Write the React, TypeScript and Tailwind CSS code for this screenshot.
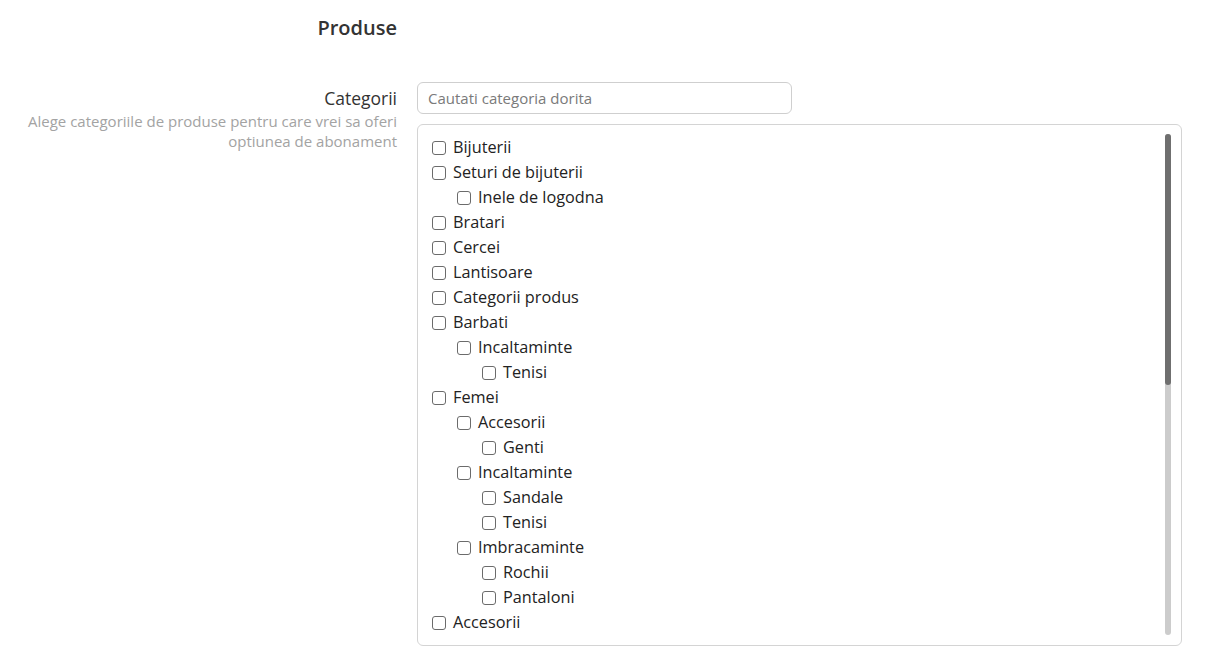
import * as React from "react";

type Category = { name: string; level: number };

const CATEGORIES: Category[] = [
  { name: "Bijuterii", level: 0 },
  { name: "Seturi de bijuterii", level: 0 },
  { name: "Inele de logodna", level: 1 },
  { name: "Bratari", level: 0 },
  { name: "Cercei", level: 0 },
  { name: "Lantisoare", level: 0 },
  { name: "Categorii produs", level: 0 },
  { name: "Barbati", level: 0 },
  { name: "Incaltaminte", level: 1 },
  { name: "Tenisi", level: 2 },
  { name: "Femei", level: 0 },
  { name: "Accesorii", level: 1 },
  { name: "Genti", level: 2 },
  { name: "Incaltaminte", level: 1 },
  { name: "Sandale", level: 2 },
  { name: "Tenisi", level: 2 },
  { name: "Imbracaminte", level: 1 },
  { name: "Rochii", level: 2 },
  { name: "Pantaloni", level: 2 },
  { name: "Accesorii", level: 0 },
];

const INDENT = ["pl-0", "pl-[25px]", "pl-[50px]"];

export default function App() {
  const [checked, setChecked] = React.useState<Record<number, boolean>>({});
  const [query, setQuery] = React.useState("");

  const visible = CATEGORIES.map((c, i) => ({ ...c, i })).filter((c) =>
    c.name.toLowerCase().includes(query.toLowerCase())
  );

  return (
    <div className="min-h-screen bg-white font-['Open_Sans',_'Liberation_Sans',_sans-serif] text-[#333]">
      <div className="flex pt-[14px]">
        <div className="w-[397px] text-right text-[20px] font-semibold leading-[28px] text-[#333]">
          Produse
        </div>
      </div>

      <div className="mt-[40px] flex">
        <div className="w-[397px] pt-[3px] text-right">
          <div className="text-[17.5px] leading-[27px] text-[#333]">Categorii</div>
          <div className="text-[15px] leading-[19.5px] text-[#a3a3a3]">
            Alege categoriile de produse pentru care vrei sa oferi
            <br />
            optiunea de abonament
          </div>
        </div>

        <div className="ml-[20px] flex w-[765px] flex-col">
          <input
            type="text"
            value={query}
            onChange={(e) => setQuery(e.target.value)}
            placeholder="Cautati categoria dorita"
            className="h-[32px] w-[375px] rounded-[6px] border border-[#cfcfcf] px-[10px] text-[15px] text-[#333] outline-none placeholder:text-[#7a7a7a]"
          />

          <div className="mt-[10px] flex h-[522px] rounded-[6px] border border-[#d4d4d4]">
            <ul className="flex-1 overflow-hidden pl-[14px] pt-[10px]">
              {visible.map((c) => (
                <li
                  key={c.i}
                  className={`flex h-[25px] items-center gap-[7px] text-[16.25px] text-[#222] ${INDENT[c.level]}`}
                >
                  <button
                    type="button"
                    role="checkbox"
                    aria-checked={!!checked[c.i]}
                    onClick={() => setChecked((s) => ({ ...s, [c.i]: !s[c.i] }))}
                    className="flex h-[14px] w-[14px] shrink-0 items-center justify-center rounded-[3px] border border-[#6b6b6b] bg-white"
                  >
                    {checked[c.i] && (
                      <svg viewBox="0 0 12 12" className="h-[10px] w-[10px]">
                        <path d="M2 6.5l2.5 2.5L10 3.5" fill="none" stroke="#333" strokeWidth="1.8" />
                      </svg>
                    )}
                  </button>
                  <span>{c.name}</span>
                </li>
              ))}
            </ul>
            <div className="mr-[10px] mt-[9px] mb-[10px] flex w-[6px] flex-col rounded-full bg-[#cccccc]">
              <div className="h-[251px] rounded-full bg-[#6f6f6f]" />
            </div>
          </div>
        </div>
      </div>
    </div>
  );
}
